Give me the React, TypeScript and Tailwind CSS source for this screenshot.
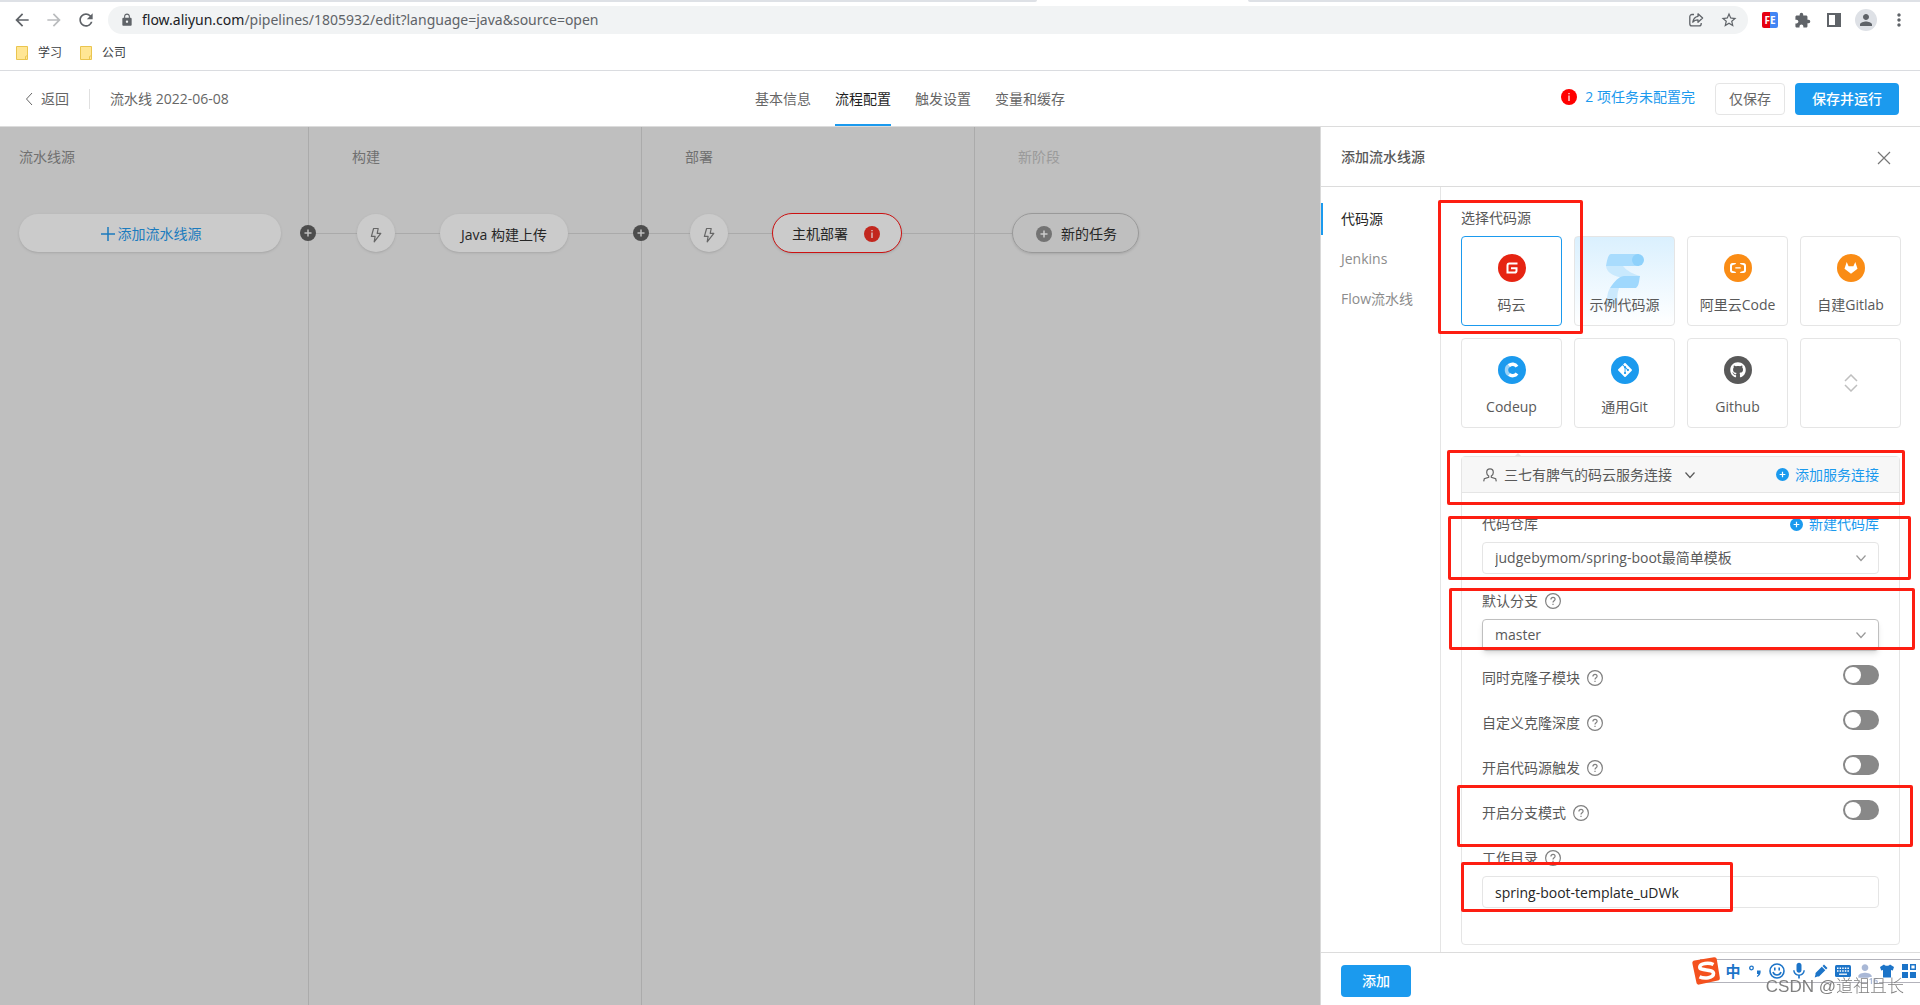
import React, { useState } from "react";
import { FaGithub } from "react-icons/fa";
import {
  MdArrowBack,
  MdArrowForward,
  MdExtension,
  MdKeyboard,
  MdLock,
  MdMic,
  MdMoreVert,
  MdPerson,
  MdRefresh,
  MdStarBorder,
} from "react-icons/md";
import { SiAlibabacloud, SiGit } from "react-icons/si";

function ChevronDown({ className }: { className?: string }) {
  return (
    <svg className={className} width="12" height="12" viewBox="0 0 12 12" fill="none" stroke="currentColor" strokeWidth="1.2">
      <path d="M1.5 3.5 6 8.5l4.5-5" />
    </svg>
  );
}

function PlusCircle({ size, mark = "#fff" }: { size: number; mark?: string }) {
  return (
    <svg width={size} height={size} viewBox="0 0 16 16" className="shrink-0">
      <circle cx="8" cy="8" r="8" fill="currentColor" />
      <path d="M8 4.5v7M4.5 8h7" stroke={mark} strokeWidth="1.5" />
    </svg>
  );
}

function InfoCircle({ mark = "#fff" }: { mark?: string }) {
  return (
    <svg width="16" height="16" viewBox="0 0 16 16" className="shrink-0">
      <circle cx="8" cy="8" r="8" fill="currentColor" />
      <path d="M8 6.5v5.5M8 4v1.3" stroke={mark} strokeWidth="1.2" />
    </svg>
  );
}

function Help() {
  return (
    <svg width="16" height="16" viewBox="0 0 16 16" fill="none" stroke="#808080" strokeWidth="1.2" className="shrink-0">
      <circle cx="8" cy="8" r="7.4" />
      <path d="M5.9 6.5c0-1.3.9-2.1 2.1-2.1s2.1.8 2.1 1.9c0 1.5-2.1 1.5-2.1 3.2M8 10.7v1.3" />
    </svg>
  );
}

function Bolt() {
  return (
    <svg width="12" height="16" viewBox="0 0 12 16" fill="none" stroke="#666" strokeWidth="1.2">
      <path d="M3.6 1.500h4.600L7.200 6.300h3.600L4.200 14.800l.9-5.400H1.400z" strokeLinejoin="round" />
    </svg>
  );
}

function BrowserChrome() {
  return (
    <header className="border-b border-[#dadce0] bg-white">
      <div className="flex h-[2px]">
        <div className="w-[54%] rounded-br bg-[#dee1e6]" />
        <div className="w-[11%]" />
        <div className="flex-1 rounded-bl bg-[#dee1e6]" />
      </div>
      <div className="flex h-9 items-center text-[#5f6368]">
        <div className="flex w-[108px] items-center gap-3 pl-3">
          <button aria-label="back"><MdArrowBack size={20} /></button>
          <button aria-label="forward" className="text-[#babcbe]"><MdArrowForward size={20} /></button>
          <button aria-label="reload"><MdRefresh size={20} /></button>
        </div>
        <div className="flex h-7 flex-1 items-center rounded-full bg-[#f1f3f4] pr-[10px] pl-3">
          <MdLock size={14} />
          <span className="ml-2 flex-1 font-['Noto_Sans',sans-serif] text-sm">
            <span className="text-[#202124]">flow.aliyun.com</span>
            /pipelines/1805932/edit?language=java&amp;source=open
          </span>
          <button aria-label="share" className="mr-4">
            <svg width="16" height="16" viewBox="0 0 16 16" fill="none" stroke="currentColor" strokeWidth="1.3">
              <path d="M6 2.5H4c-1.200 0-2.200 1-2.200 2.200v7c0 1.200 1 2.200 2.200 2.200h7c1.200 0 2.200-1 2.200-2.200V11" />
              <path d="M10 1.800 14.600 6 10 10.200V7.800c-2.600 0-4 .6-5.200 2.400.4-3 2-5.400 5.200-5.900z" strokeLinejoin="round" />
            </svg>
          </button>
          <button aria-label="bookmark"><MdStarBorder size={18} /></button>
        </div>
        <div className="flex w-[172px] items-center pl-[14px]">
          <span className="flex size-4 items-center justify-center rounded-xs bg-linear-to-r from-[#e60012] from-50% to-[#4285f4] to-50% text-[10px] font-bold text-white">
            FE
          </span>
          <MdExtension size={17} className="ml-4" />
          <svg width="14" height="14" viewBox="0 0 14 14" className="ml-4">
            <path d="M0 0h14v14H0zM2 2v10h6V2z" fill="currentColor" fillRule="evenodd" />
          </svg>
          <span className="ml-[14px] flex size-[22px] items-center justify-center rounded-full bg-[#dee1e6]">
            <MdPerson size={18} />
          </span>
          <MdMoreVert size={20} className="ml-3" />
        </div>
      </div>
      <nav className="flex h-8 items-center gap-[18px] pb-[2px] pl-4 text-xs text-[#3c4043]">
        {["学习", "公司"].map((name) => (
          <a key={name} href="#" className="flex items-center gap-[10px]">
            <svg width="12" height="14" viewBox="0 0 12 14">
              <path d="M.5.500h11v13H.5z" fill="#ffe694" stroke="#eac54f" />
              <path d="M9.500 13.500v-3l2-1" fill="none" stroke="#eac54f" />
            </svg>
            {name}
          </a>
        ))}
      </nav>
    </header>
  );
}

const tabs = ["基本信息", "流程配置", "触发设置", "变量和缓存"];

function PipelineHeader() {
  const [active, setActive] = useState("流程配置");

  return (
    <div className="grid h-14 grid-cols-[755fr_310fr_855fr] border-b border-[#dcdcdc] bg-white text-[#666]">
      <div className="flex items-center pt-px pr-4 pl-6">
        <a href="#" className="flex items-center gap-[7px]">
          <svg width="10" height="14" viewBox="0 0 10 14" fill="none" stroke="currentColor">
            <path d="M8 1 2.500 7 8 13" />
          </svg>
          返回
        </a>
        <div className="mx-5 h-5 w-px bg-[#e0e0e0]" />
        <span>流水线 2022-06-08</span>
      </div>
      <nav className="flex gap-6 whitespace-nowrap">
        {tabs.map((tab) => (
          <button
            key={tab}
            onClick={() => setActive(tab)}
            className={
              active === tab
                ? "border-b-2 border-[#1b9aee] pt-[3px] text-[#1f1f1f]"
                : "border-b-2 border-transparent pt-[3px]"
            }
          >
            {tab}
          </button>
        ))}
      </nav>
      <div className="flex items-center justify-end pr-[21px] whitespace-nowrap">
        <a href="#" className="mr-5 flex items-center gap-2 pb-1 text-[#1b9aee]">
          <span className="text-[#f00]"><InfoCircle /></span>
          2 项任务未配置完
        </a>
        <button className="h-8 w-[70px] rounded-sm border border-[#e5e5e5]">仅保存</button>
        <button className="ml-[10px] h-8 w-[104px] rounded-sm bg-[#1b9aee] font-medium text-white">
          保存并运行
        </button>
      </div>
    </div>
  );
}

interface StageProps {
  title: string;
  className: string;
  children: React.ReactNode;
}

function Stage({ title, className, children }: StageProps) {
  return (
    <section className={`relative shrink-0 pt-5 ${className}`}>
      <h2 className="h-5">{title}</h2>
      {children}
    </section>
  );
}

function Line({ className }: { className: string }) {
  return <div className={`h-px bg-[#aaa] ${className}`} />;
}

// Round button that sits on the divider between two stages
function AddStage() {
  return (
    <button aria-label="添加阶段" className="absolute top-[98px] -right-2 z-10 text-[#4d4d4d]">
      <PlusCircle size={16} mark="#bfbfbf" />
    </button>
  );
}

function Trigger() {
  return (
    <button
      aria-label="触发"
      className="flex size-[38px] shrink-0 items-center justify-center rounded-full bg-[#cbcbcb] pt-1 shadow"
    >
      <Bolt />
    </button>
  );
}

function Canvas() {
  return (
    <main className="flex min-w-0 flex-1 overflow-hidden bg-[#bfbfbf] text-[#707070]">
      <Stage title="流水线源" className="w-[309px] border-r border-[#ababab] pl-[19px]">
        <div className="mt-[46px] flex h-10 items-center">
          <button className="flex h-[38px] w-[262px] items-center justify-center gap-[3px] rounded-full bg-[#cbcbcb] pt-[2px] pl-[2px] text-[#1b7bbe] shadow">
            <svg width="14" height="14" viewBox="0 0 14 14" stroke="currentColor" strokeWidth="1.5">
              <path d="M7 0v14M0 7h14" />
            </svg>
            添加流水线源
          </button>
        </div>
        <AddStage />
      </Stage>
      <Stage title="构建" className="w-[333px] border-r border-[#ababab] [&>h2]:pl-[43px]">
        <div className="mt-[46px] flex h-10 items-center text-[#262626]">
          <Line className="w-12" />
          <Trigger />
          <Line className="w-[45px]" />
          <button className="h-[38px] w-32 rounded-full bg-[#cbcbcb] pt-1 shadow">Java 构建上传</button>
          <Line className="flex-1" />
        </div>
        <AddStage />
      </Stage>
      <Stage title="部署" className="w-[333px] border-r border-[#ababab] [&>h2]:pl-[43px]">
        <div className="mt-[46px] flex h-10 items-center text-[#262626]">
          <Line className="w-12" />
          <Trigger />
          <Line className="w-11" />
          <button className="flex h-10 w-[130px] items-center gap-4 rounded-full border border-[#cc1111] bg-[#cbcbcb] pt-[2px] pl-[19px] shadow">
            主机部署
            <span className="text-[#c2271e]"><InfoCircle mark="#ddd" /></span>
          </button>
          <Line className="flex-1" />
        </div>
      </Stage>
      <Stage title="新阶段" className="text-[#9a9a9a] [&>h2]:pl-[43px]">
        <div className="mt-[46px] flex h-10 items-center">
          <Line className="w-[37px]" />
          <button className="flex h-10 w-[127px] items-center gap-[9px] rounded-full border border-[#999] pt-[2px] pl-[23px] text-[#262626] shadow">
            <span className="text-[#737373]"><PlusCircle size={16} mark="#ccc" /></span>
            新的任务
          </button>
        </div>
      </Stage>
    </main>
  );
}

function GiteeLogo() {
  return (
    <svg width="12" height="12" viewBox="0 0 12 12" fill="none" stroke="#fff" strokeWidth="2">
      <path d="M11.500 1.500H3.400C2.200 1.500 1.500 2.200 1.500 3.400v7.100h7.200c1.200 0 1.800-.7 1.800-1.800V6.200H5" />
    </svg>
  );
}

function GitlabLogo() {
  return (
    <svg width="14" height="14" viewBox="0 0 14 14" fill="#fff">
      <path d="M2.700 1 4.600 5.200h4.800L11.300 1l2.200 6.800L7 12.800.5 7.800z" />
    </svg>
  );
}

function CodeupLogo() {
  return (
    <svg width="16" height="16" viewBox="0 0 16 16" fill="none" strokeWidth="3.400">
      <path d="M5.600 3.100a5.400 5.400 0 0 0 .2 9.900" stroke="#9bd3f8" />
      <path d="M13 4.600A5.400 5.400 0 0 0 5 3.600" stroke="#fff" />
      <path d="M5.200 12.500a5.400 5.400 0 0 0 7.800-1.100" stroke="#fff" />
    </svg>
  );
}

function FlowRibbon() {
  return (
    <svg width="40" height="52" viewBox="0 0 40 52" className="absolute top-4 left-[30px]">
      <path d="M6 1h28v12H1c1-5 2-12 5-12z" fill="#a9dcfd" />
      <circle cx="33" cy="7" r="6" fill="#8ed1fb" />
      <path d="M1 13h17c4 5 10 8 17 10-7 2-11 1-17 2C10 23 2 21 1 13z" fill="#c9e9fd" />
      <path d="M35 23c-1 5-1 10-4 12H5c5-7 8-11 14-12z" fill="#9fd8fd" />
      <path d="M5 35h9c-2 5-2 11-1 16H2C2 45 2 40 5 35z" fill="#cbe9fd" />
    </svg>
  );
}

const sources = [
  { name: "码云", color: "bg-[#e62412]", icon: <GiteeLogo /> },
  { name: "示例代码源", color: "", icon: null },
  { name: "阿里云Code", color: "bg-[#fa8c15]", icon: <SiAlibabacloud size={16} /> },
  { name: "自建Gitlab", color: "bg-[#fa8c15]", icon: <GitlabLogo /> },
  { name: "Codeup", color: "bg-[#1b9aee]", icon: <CodeupLogo /> },
  { name: "通用Git", color: "bg-[#1b9aee]", icon: <SiGit size={14} /> },
  { name: "Github", color: "bg-[#595959]", icon: <FaGithub size={16} /> },
];

function SourcePicker() {
  const [selected, setSelected] = useState("码云");

  return (
    <div className="mt-2 grid grid-cols-4 gap-3">
      {sources.map((source) => (
        <button
          key={source.name}
          onClick={() => setSelected(source.name)}
          className={`relative flex h-[90px] flex-col items-center rounded-sm border pt-[17px] whitespace-nowrap ${
            selected === source.name ? "border-[#1b9aee]" : "border-[#e5e5e5]"
          } ${source.icon ? "" : "bg-linear-to-b from-[#daf0fe] to-white"}`}
        >
          {!source.icon && <FlowRibbon />}
          <span className={`flex size-7 items-center justify-center rounded-full text-white ${source.color}`}>
            {source.icon}
          </span>
          <span className="relative mt-[13px]">{source.name}</span>
        </button>
      ))}
      <button aria-label="收起" className="flex h-[90px] items-center justify-center rounded-sm border border-[#e5e5e5]">
        <svg width="14" height="18" viewBox="0 0 14 18" fill="none" stroke="#bfbfbf" strokeWidth="1.500">
          <path d="m1 7 6-6 6 6M1 11l6 6 6-6" />
        </svg>
      </button>
    </div>
  );
}

function SwitchRow({ id, label }: { id: string; label: string }) {
  return (
    <div className="flex h-[23px] items-start justify-between">
      <div className="flex items-center gap-[7px] pt-[3px]">
        <label htmlFor={id}>{label}</label>
        <Help />
      </div>
      <input
        id={id}
        type="checkbox"
        role="switch"
        className="h-5 w-9 appearance-none rounded-full bg-[#888] p-[2px] before:block before:size-4 before:rounded-full before:bg-white checked:bg-[#1b9aee] checked:before:ml-4"
      />
    </div>
  );
}

function SelectBox({ id, value, className }: { id: string; value: string; className: string }) {
  return (
    <div className="relative mt-2">
      <select id={id} className={`h-8 w-full appearance-none rounded-sm border bg-white px-3 ${className}`}>
        <option>{value}</option>
      </select>
      <ChevronDown className="pointer-events-none absolute top-[10px] right-3 text-[#999]" />
    </div>
  );
}

function AddLink({ children }: { children: React.ReactNode }) {
  return (
    <a href="#" className="flex items-center gap-[6px] text-[#1b9aee]">
      <PlusCircle size={13} />
      {children}
    </a>
  );
}

function ConnectionForm() {
  return (
    <div className="relative mt-7 mr-px rounded-sm border border-[#e5e5e5]">
      <div className="absolute -top-1 left-13 h-1 w-2 bg-[#e5e5e5] [clip-path:polygon(50%_0,100%_100%,0_100%)]" />
      <div className="flex h-9 items-center justify-between border-b border-[#e5e5e5] bg-[#f7f7f7] pr-5 pl-[21px]">
        <button className="flex items-center">
          <svg width="14" height="14" viewBox="0 0 14 14" fill="none" stroke="#666" strokeWidth="1.200">
            <path d="M7 .800c-2 0-3.300 1.500-3.300 3.600 0 1.800.9 3 2 3.700v1.200L1.300 10.800.7 13.300M7 .800c2 0 3.300 1.500 3.300 3.600 0 1.800-.9 3-2 3.700v1.200l4.400 1.500.6 2.500" />
          </svg>
          <span className="ml-[7px]">三七有脾气的码云服务连接</span>
          <ChevronDown className="ml-3" />
        </button>
        <AddLink>添加服务连接</AddLink>
      </div>
      <form className="px-5 pt-[21px] pb-9">
        <div className="flex h-5 items-center justify-between">
          <label htmlFor="repo">代码仓库</label>
          <AddLink>新建代码库</AddLink>
        </div>
        <SelectBox id="repo" value="judgebymom/spring-boot最简单模板" className="border-[#e5e5e5]" />
        <div className="mt-[17px] flex h-5 items-center gap-[7px]">
          <label htmlFor="branch">默认分支</label>
          <Help />
        </div>
        <SelectBox id="branch" value="master" className="border-[#bfbfbf] shadow-md" />
        <div className="mt-[14px] flex flex-col gap-[22px]">
          <SwitchRow id="submodule" label="同时克隆子模块" />
          <SwitchRow id="depth" label="自定义克隆深度" />
          <SwitchRow id="trigger" label="开启代码源触发" />
          <SwitchRow id="branch-mode" label="开启分支模式" />
        </div>
        <div className="mt-[25px] flex h-5 items-center gap-[7px]">
          <label htmlFor="workdir">工作目录</label>
          <Help />
        </div>
        <input
          id="workdir"
          defaultValue="spring-boot-template_uDWk"
          className="mt-2 block h-8 w-full rounded-sm border border-[#e5e5e5] px-3 pt-px text-[#262626]"
        />
      </form>
    </div>
  );
}

// Red frames drawn over the panel, relative to its top left corner
const marks = [
  "top-[73px] left-[117px] h-[134px] w-[145px]",
  "top-[323px] left-[126px] h-[55px] w-[458px]",
  "top-[389px] left-[127px] h-[64px] w-[463px]",
  "top-[461px] left-[128px] h-[62px] w-[466px]",
  "top-[658px] left-[136px] h-[62px] w-[456px]",
  "top-[735px] left-[140px] h-[50px] w-[272px]",
];

function SourcePanel() {
  return (
    <aside className="relative flex w-[600px] shrink-0 flex-col border-l border-[#d9d9d9] bg-white text-[#595959]">
      <div className="flex h-15 items-center justify-between border-b border-[#dcdcdc] pr-[29px] pl-5">
        <h2 className="font-medium">添加流水线源</h2>
        <button aria-label="关闭" className="pt-[2px]">
          <svg width="14" height="14" viewBox="0 0 14 14" stroke="#777" strokeWidth="1.200">
            <path d="m1 1 12 12M13 1 1 13" />
          </svg>
        </button>
      </div>
      <div className="flex flex-1">
        <nav className="flex w-[120px] shrink-0 flex-col gap-2 border-r border-[#e5e5e5] pt-4 text-[#8c8c8c]">
          <a href="#" className="flex h-8 items-center border-l-2 border-[#1b9aee] pl-[18px] text-[#262626]">代码源</a>
          <a href="#" className="flex h-8 items-center pl-5">Jenkins</a>
          <a href="#" className="flex h-8 items-center pl-5">Flow流水线</a>
        </nav>
        <div className="flex-1 pt-[21px] pr-[19px] pb-[7px] pl-5">
          <h3 className="h-5">选择代码源</h3>
          <SourcePicker />
          <ConnectionForm />
        </div>
      </div>
      <div className="border-t border-[#dcdcdc] px-5 pt-3 pb-2">
        <button className="block h-8 w-[70px] rounded-sm bg-[#1b9aee] font-medium text-white">添加</button>
      </div>
      {marks.map((mark) => (
        <div key={mark} className={`pointer-events-none absolute rounded-xs border-3 border-[#fd1e12] ${mark}`} />
      ))}
    </aside>
  );
}

function InputMethodBar() {
  return (
    <div className="fixed right-0 bottom-[22px] flex h-6 w-[220px] items-center border-y border-[#b3b3bb] bg-white text-[#1c74c8]">
      <svg width="30" height="30" viewBox="0 0 30 30" className="absolute -left-[9px]">
        <path d="M3.500 4.500 23 1.200c1.500-.2 2.600.5 2.800 2l3 18.500c.2 1.500-.6 2.600-2 2.800L8.200 28.600c-1.500.2-2.500-.5-2.800-2L1.400 7.400c-.3-1.500.6-2.600 2.100-2.900z" fill="#f4511e" />
        <path d="M22.500 8.500C18 6.300 9 7 8.800 11c-.2 4.500 13.700 1.500 13.700 6.600 0 4.500-9 5.400-14 3.200" fill="none" stroke="#fff" strokeWidth="3.600" />
      </svg>
      <div className="ml-[22px] grid w-[198px] grid-cols-9 place-items-center">
        <span className="text-[15px] leading-5 font-bold">中</span>
        <svg width="12" height="14" viewBox="0 0 12 14">
          <circle cx="2.500" cy="4" r="1.800" fill="none" stroke="currentColor" strokeWidth="1.300" />
          <path d="M8 6.500h3.600c.4 3-.7 5.200-3.200 6.500l-.6-1c1-.6 1.500-1.200 1.600-2H8z" fill="currentColor" />
        </svg>
        <svg width="16" height="16" viewBox="0 0 16 16" fill="none" stroke="currentColor" strokeWidth="1.600">
          <circle cx="8" cy="8" r="7" />
          <path d="M5.800 4.500v3M10.200 4.500v3M4 9c.6 2 2.100 3 4 3s3.400-1 4-3" />
        </svg>
        <MdMic size={20} />
        <svg width="14" height="14" viewBox="0 0 14 14" fill="currentColor">
          <path d="M10 .500 13.500 4 12 5.500 8.500 2zM7.800 2.700 11.300 6.200 5 12.500H3.500l-2.800 1 .8-3L1.500 9z" />
        </svg>
        <svg width="16" height="12" viewBox="0 0 16 12">
          <rect width="16" height="12" rx="1.500" fill="currentColor" />
          <path d="M2 3.200h12M2 6h12" stroke="#fff" strokeWidth="1.500" strokeDasharray="1.500 1.100" />
          <path d="M4 9.200h8" stroke="#fff" strokeWidth="1.300" />
        </svg>
        <span className="relative text-[#a9b8d6]">
          <MdPerson size={20} />
          <span className="absolute -right-1 -bottom-1 rounded-xs bg-white px-px text-[8px] leading-2 font-bold">16</span>
        </span>
        <svg width="14" height="14" viewBox="0 0 14 14" fill="currentColor">
          <path d="M4 .500c.8 1.800 5.200 1.800 6 0l4 2.500-1.200 3.600-1.800-.5v7.400H3V6.100l-1.800.5L0 3z" />
        </svg>
        <svg width="14" height="14" viewBox="0 0 14 14" fill="currentColor">
          <path d="M0 0h6v6H0zM0 8h6v6H0zM8 8h6v6H8z" />
          <path d="M8.700.700h4.600v4.600H8.700z" fill="none" stroke="currentColor" strokeWidth="1.400" />
        </svg>
      </div>
    </div>
  );
}

export default function App() {
  return (
    <div className="flex min-h-screen flex-col bg-white font-['Open_Sans','Noto_Sans_CJK_SC',sans-serif] text-sm leading-5">
      <BrowserChrome />
      <PipelineHeader />
      <div className="flex flex-1">
        <Canvas />
        <SourcePanel />
      </div>
      <InputMethodBar />
      <div className="fixed right-4 bottom-1 font-['Liberation_Sans','Noto_Sans_CJK_SC',sans-serif] text-[17px] leading-7 font-light text-[#808080]">
        CSDN @道祖且长
      </div>
    </div>
  );
}
